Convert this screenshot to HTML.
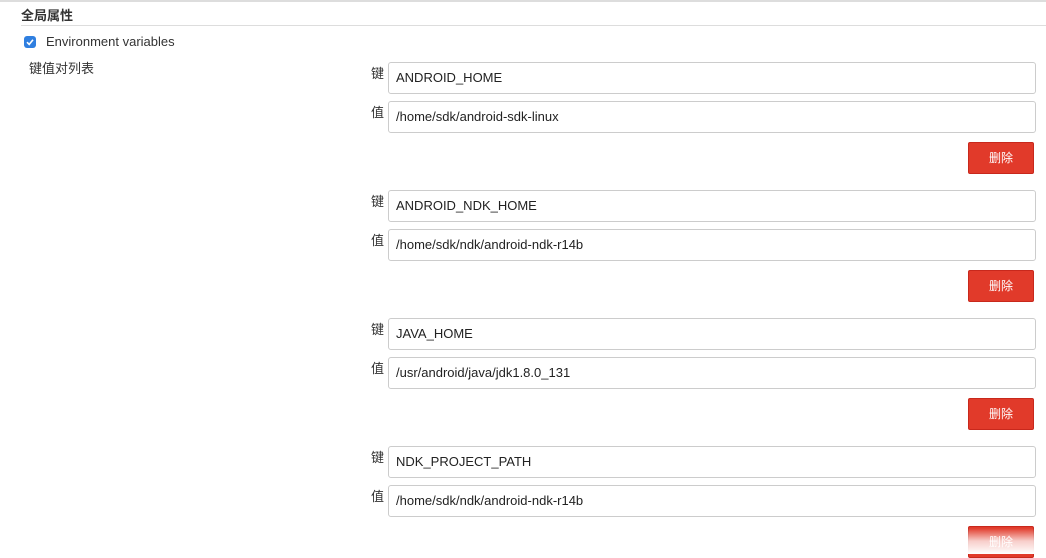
<!DOCTYPE html>
<html><head><meta charset="utf-8"><style>
body{margin:0;width:1046px;height:554px;overflow:hidden;background:#fff;font-family:"Liberation Sans","Noto Sans CJK SC",sans-serif;color:#333;position:relative}
.a{position:absolute}
.in{position:absolute;left:388px;height:30px;border:1px solid #ccc;border-radius:3px;font-size:13px;line-height:30px;padding-left:7px;box-sizing:content-box;width:639px;color:#222}
.lb{position:absolute;left:371px;font-size:13px;color:#333}
.btn{position:absolute;left:968px;width:66px;height:32px;background:#e13a2a;border:1px solid #c8281c;box-sizing:border-box;color:#fff;font-size:12px;text-align:center;line-height:30px;border-radius:2px}
</style></head><body>
<div class="a" style="left:0;top:0;width:1046px;height:2px;background:#ddd"></div>
<div class="a" style="left:21px;top:5px;font-size:13px;font-weight:bold;color:#333">全局属性</div>
<div class="a" style="left:21px;top:25px;width:1025px;height:1px;background:#ddd"></div>
<div class="a" style="left:24px;top:36px;width:12px;height:12px;background:#2f7fe0;border-radius:3px"><svg width="12" height="12" style="position:absolute;left:0;top:0"><path d="M3 6.2L5.2 8.4L9 3.8" stroke="#fff" stroke-width="1.6" fill="none"/></svg></div>
<div class="a" style="left:46px;top:34px;font-size:13px">Environment variables</div>
<div class="a" style="left:29px;top:58px;font-size:13px">键值对列表</div>

<div class="lb" style="top:63px">键</div><div class="in" style="top:62px">ANDROID_HOME</div>
<div class="lb" style="top:102px">值</div><div class="in" style="top:101px">/home/sdk/android-sdk-linux</div>
<div class="btn" style="top:142px">删除</div>

<div class="lb" style="top:191px">键</div><div class="in" style="top:190px">ANDROID_NDK_HOME</div>
<div class="lb" style="top:230px">值</div><div class="in" style="top:229px">/home/sdk/ndk/android-ndk-r14b</div>
<div class="btn" style="top:270px">删除</div>

<div class="lb" style="top:319px">键</div><div class="in" style="top:318px">JAVA_HOME</div>
<div class="lb" style="top:358px">值</div><div class="in" style="top:357px">/usr/android/java/jdk1.8.0_131</div>
<div class="btn" style="top:398px">删除</div>

<div class="lb" style="top:447px">键</div><div class="in" style="top:446px">NDK_PROJECT_PATH</div>
<div class="lb" style="top:486px">值</div><div class="in" style="top:485px">/home/sdk/ndk/android-ndk-r14b</div>
<div class="btn" style="top:526px">删除</div>
<div class="a" style="left:0;top:528px;width:1046px;height:26px;background:linear-gradient(rgba(255,255,255,0),rgba(255,255,255,0.75) 50%,#fff)"></div>
</body></html>
